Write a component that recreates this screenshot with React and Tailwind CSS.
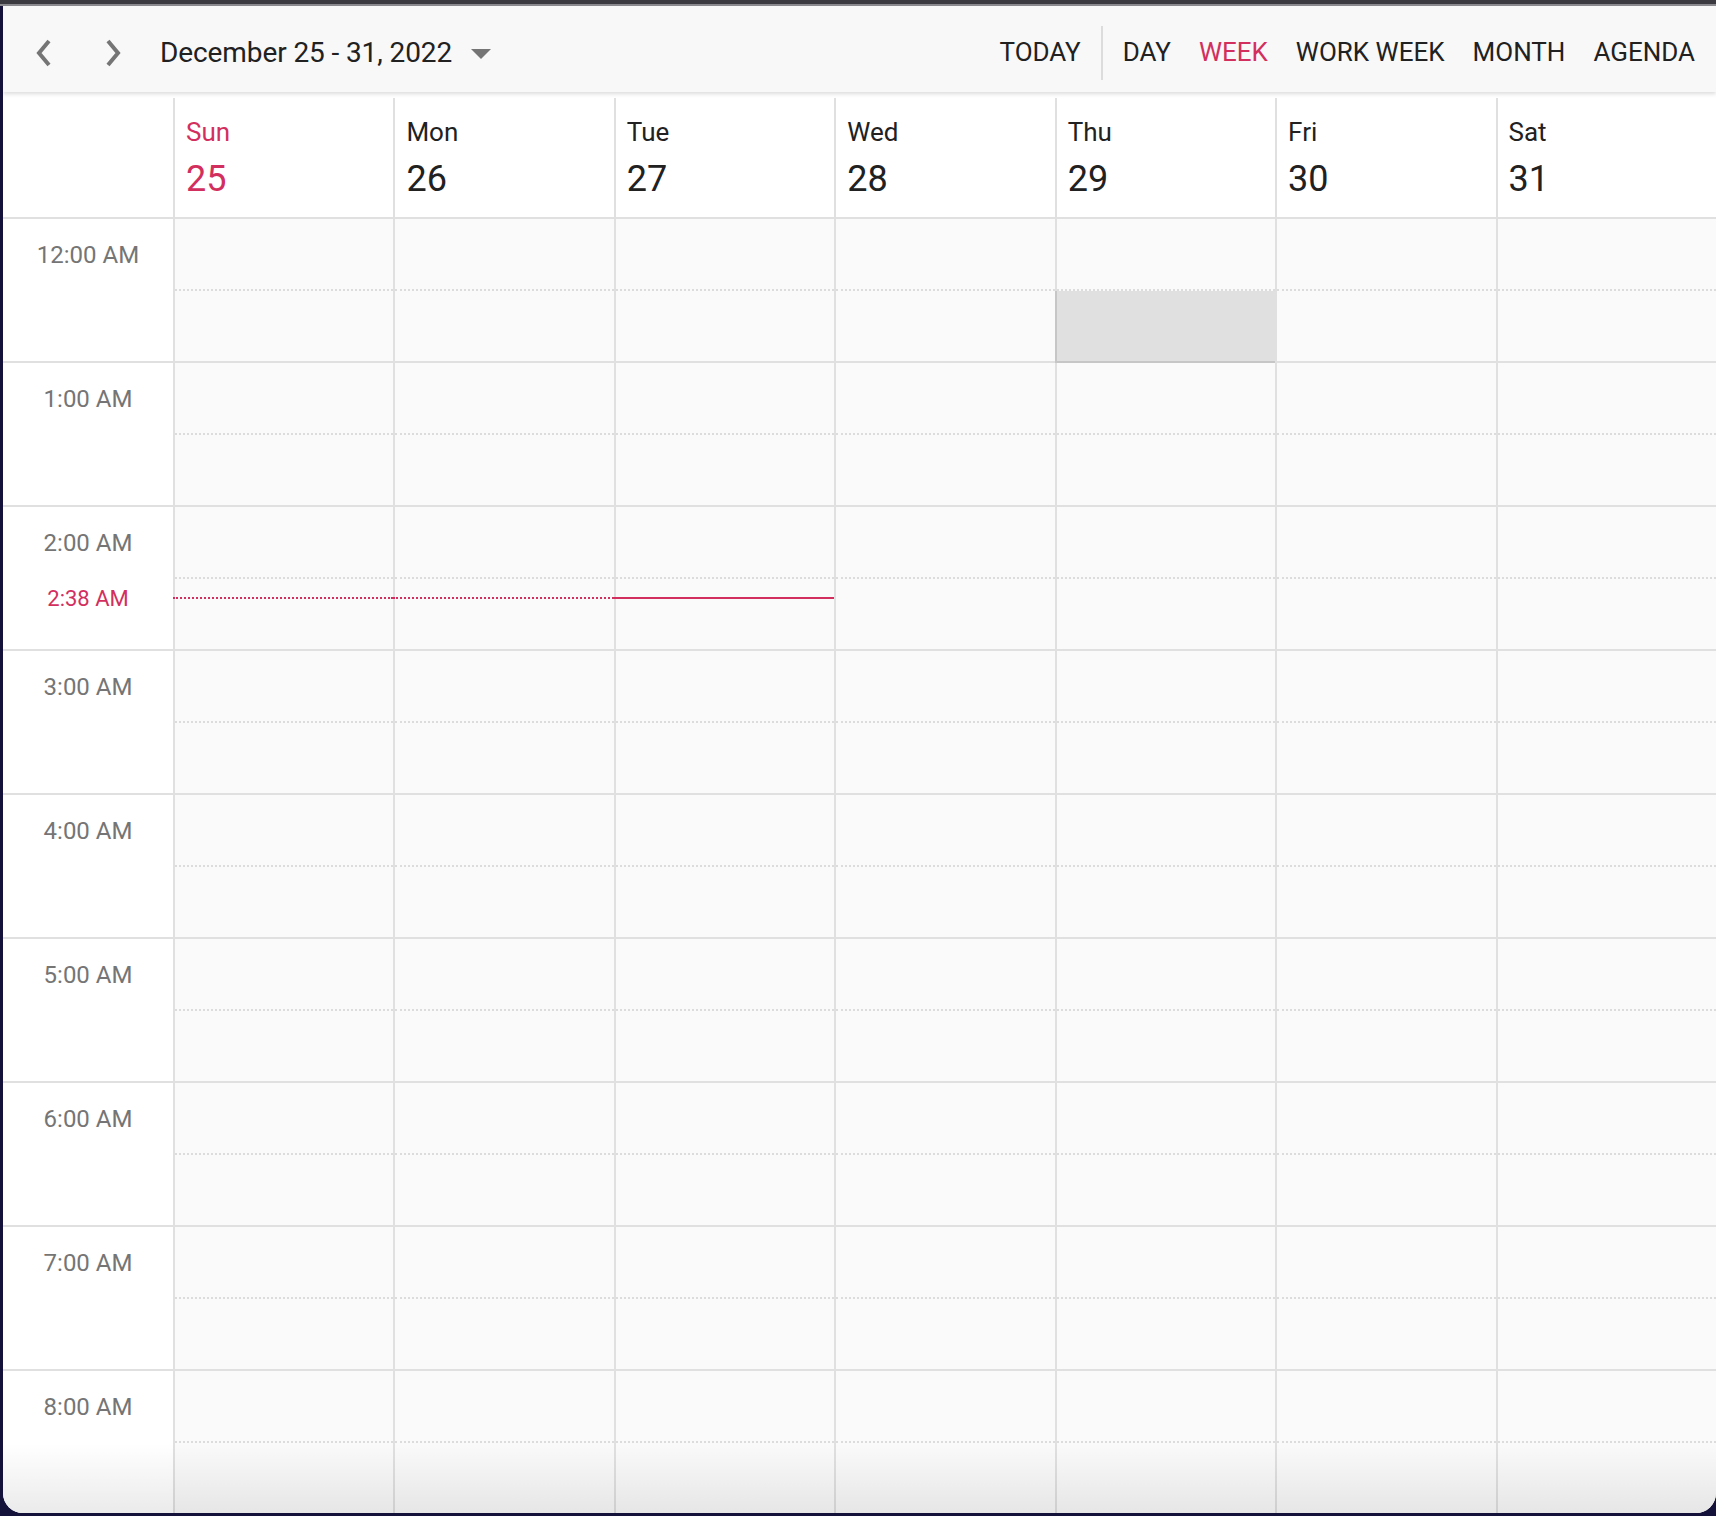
import React from "react";

const days = [
  { name: "Sun", date: 25, today: true },
  { name: "Mon", date: 26 },
  { name: "Tue", date: 27 },
  { name: "Wed", date: 28 },
  { name: "Thu", date: 29 },
  { name: "Fri", date: 30 },
  { name: "Sat", date: 31 },
];

const hours = [
  "12:00 AM",
  "1:00 AM",
  "2:00 AM",
  "3:00 AM",
  "4:00 AM",
  "5:00 AM",
  "6:00 AM",
  "7:00 AM",
  "8:00 AM",
];

const views = ["DAY", "WEEK", "WORK WEEK", "MONTH", "AGENDA"];

function Chevron({ dir }) {
  return (
    <svg width="24" height="30" viewBox="0 0 24 30" className="text-[#757575]">
      <path
        d={dir === "left" ? "M16 3 L6 15 L16 27" : "M8 3 L18 15 L8 27"}
        fill="none"
        stroke="currentColor"
        strokeWidth="4"
      />
    </svg>
  );
}

function Toolbar() {
  return (
    <div className="relative z-10 flex h-[86px] items-center bg-[#f8f8f8] pt-[7px] shadow-[0_2px_4px_rgba(0,0,0,0.14)]">
      <div className="ml-[30px] flex items-center gap-[43px]">
        <Chevron dir="left" />
        <Chevron dir="right" />
      </div>
      <div className="ml-[36px] flex items-center">
        <span className="text-[28px] tracking-[-0.1px] text-[#212121]">December 25 - 31, 2022</span>
        <svg width="20" height="10" viewBox="0 0 20 10" className="ml-[19px] mt-[2px]">
          <path d="M0 0 L20 0 L10 10 Z" fill="#757575" />
        </svg>
      </div>
      <div className="ml-auto mr-[21px] flex items-center text-[26px] text-[#212121]">
        <span>TODAY</span>
        <div className="mx-[20px] h-[54px] w-[2px] bg-[#dcdcdc]" />
        <div className="flex items-center gap-[28px]">
          {views.map((v) => (
            <span key={v} className={v === "WEEK" ? "text-[#d32f5e]" : ""}>
              {v}
            </span>
          ))}
        </div>
      </div>
    </div>
  );
}

function Header() {
  return (
    <div className="flex h-[121px] border-b-2 border-[#e0e0e0] bg-white">
      <div className="w-[170px]" />
      {days.map((d) => (
        <div key={d.date} className="flex-1 border-l-2 border-[#e0e0e0] pl-[11px] pt-[17px]">
          <div className={`text-[26px] leading-[34px] ${d.today ? "text-[#d32f5e]" : "text-[#212121]"}`}>
            {d.name}
          </div>
          <div className={`mt-[8px] text-[36px] leading-[44px] ${d.today ? "text-[#d32f5e]" : "text-[#212121]"}`}>
            {d.date}
          </div>
        </div>
      ))}
    </div>
  );
}

function TimeColumn() {
  return (
    <div className="w-[170px] shrink-0 bg-white">
      {hours.map((h, i) => (
        <div key={h} className="relative h-[144px] border-b-2 border-[#e0e0e0] pt-[21px] text-center text-[24px] leading-[30px] text-[#757575]">
          {h}
          {i === 2 && (
            <div className="absolute inset-x-0 top-[78px] text-[22px] leading-[28px] text-[#d32f5e]">2:38 AM</div>
          )}
        </div>
      ))}
    </div>
  );
}

function DayColumn({ index }) {
  return (
    <div className="flex-1 border-l-2 border-[#e0e0e0] bg-[#fafafa]">
      {hours.map((h, i) => (
        <div key={h} className="relative h-[144px]">
          <div className="h-[72px] border-b-2 border-dotted border-[#dcdcdc]" />
          <div
            className={`h-[72px] border-b-2 border-[#e0e0e0] ${
              index === 4 && i === 0
                ? "-ml-[2px] border-l-2 border-l-[#c6c6c6] border-b-[#c6c6c6] bg-[#e0e0e0]"
                : ""
            }`}
          />
          {i === 2 && index < 2 && (
            <div className="absolute -left-[2px] right-0 top-[90px] border-t-2 border-dotted border-[#d32f5e]" />
          )}
          {i === 2 && index === 2 && (
            <div className="absolute -left-[2px] right-0 top-[90px] h-[2px] bg-[#d32f5e]" />
          )}
        </div>
      ))}
    </div>
  );
}

export default function App() {
  return (
    <div className="flex h-[1516px] w-[1716px] flex-col bg-[#14123a] font-['Roboto',sans-serif]">
      <div className="h-[6px] shrink-0 border-b-2 border-[#8a8a8e] bg-[#3a3a40]" />
      <div className="relative ml-[3px] h-[1507px] overflow-hidden rounded-b-[20px] bg-white">
        <Toolbar />
        <div className="h-[6px] bg-white" />
        <Header />
        <div className="flex">
          <TimeColumn />
          {days.map((d, i) => (
            <DayColumn key={d.date} index={i} />
          ))}
        </div>
        <div className="pointer-events-none absolute inset-x-0 bottom-0 h-[70px] bg-gradient-to-b from-black/0 to-black/[0.08]" />
      </div>
    </div>
  );
}
